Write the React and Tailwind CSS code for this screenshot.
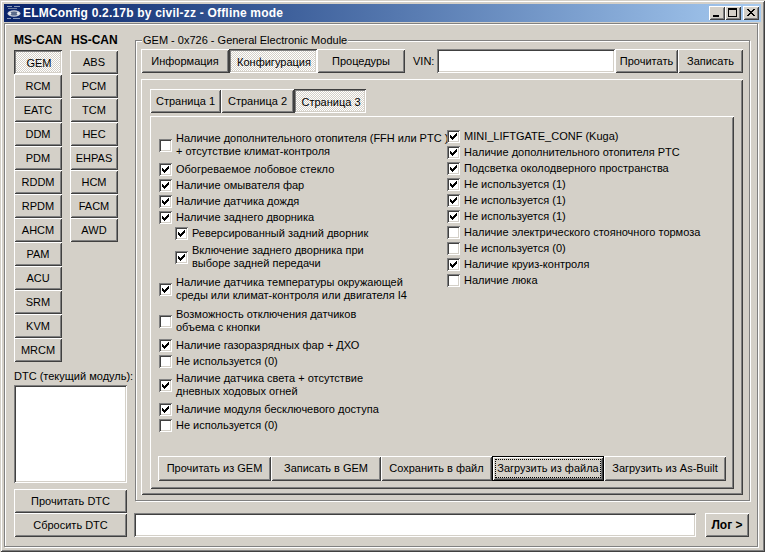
import React from "react";

const RAISED =
  "shadow-[inset_1px_1px_#fff,inset_-1px_-1px_#404040,inset_2px_2px_#d4d0c8,inset_-2px_-2px_#808080]";
const PUSHED =
  "shadow-[inset_1px_1px_#404040,inset_-1px_-1px_#fff,inset_2px_2px_#808080,inset_-2px_-2px_#d4d0c8]";
const SUNKEN =
  "shadow-[inset_1px_1px_#808080,inset_-1px_-1px_#fff,inset_2px_2px_#404040,inset_-2px_-2px_#d4d0c8]";
const CHECKER =
  "bg-[image:repeating-conic-gradient(#fff_0%_25%,#d4d0c8_0%_50%)] bg-[length:2px_2px]";

function Btn({ children, className = "", selected = false }) {
  return (
    <div
      className={`flex items-center justify-center bg-[#d4d0c8] whitespace-nowrap ${
        selected ? `${PUSHED} ${CHECKER} pt-[2px] pl-[2px]` : RAISED
      } ${className}`}
    >
      {children}
    </div>
  );
}

function Check({ on }) {
  return (
    <div className={`w-[13px] h-[13px] shrink-0 bg-white ${SUNKEN}`}>
      {on && (
        <svg width="13" height="13" viewBox="0 0 13 13" shapeRendering="crispEdges" className="block">
          <path
            d="M9 3h1v1h-1zM8 4h2v1h-2zM3 5h1v1h-1zM7 5h3v1h-3zM3 6h2v1h-2zM6 6h3v1h-3zM3 7h5v1h-5zM4 8h3v1h-3zM5 9h1v1h-1z"
            fill="#000"
          />
        </svg>
      )}
    </div>
  );
}

function Row({ on, tall, indent, first, lines }) {
  const h = tall ? "h-[32px]" : first ? "h-[15px]" : "h-[16px]";
  return (
    <div className={`flex items-center gap-[4px] ${h} ${indent ? "pl-[16px]" : ""}`}>
      <Check on={on} />
      <div className="leading-[13px] whitespace-nowrap">
        {lines.map((l, i) => (
          <div key={i}>{l}</div>
        ))}
      </div>
    </div>
  );
}

const LEFT = [
  { on: false, tall: true, lines: ["Наличие дополнительного отопителя (FFH или PTC )", "+ отсутствие климат-контроля"] },
  { on: true, lines: ["Обогреваемое лобовое стекло"] },
  { on: true, lines: ["Наличие омывателя фар"] },
  { on: true, lines: ["Наличие датчика дождя"] },
  { on: true, lines: ["Наличие заднего дворника"] },
  { on: true, indent: true, lines: ["Реверсированный задний дворник"] },
  { on: true, indent: true, tall: true, lines: ["Включение заднего дворника при", "выборе задней передачи"] },
  { on: true, tall: true, lines: ["Наличие датчика температуры окружающей", "среды или климат-контроля или двигателя I4"] },
  { on: false, tall: true, lines: ["Возможность отключения датчиков", "объема с кнопки"] },
  { on: true, lines: ["Наличие газоразрядных фар + ДХО"] },
  { on: false, lines: ["Не используется (0)"] },
  { on: true, tall: true, lines: ["Наличие датчика света + отсутствие", "дневных ходовых огней"] },
  { on: true, lines: ["Наличие модуля бесключевого доступа"] },
  { on: false, lines: ["Не используется (0)"] },
];

const RIGHT = [
  { on: true, first: true, lines: ["MINI_LIFTGATE_CONF (Kuga)"] },
  { on: true, lines: ["Наличие дополнительного отопителя PTC"] },
  { on: true, lines: ["Подсветка околодверного пространства"] },
  { on: true, lines: ["Не используется (1)"] },
  { on: true, lines: ["Не используется (1)"] },
  { on: true, lines: ["Не используется (1)"] },
  { on: false, lines: ["Наличие электрического стояночного тормоза"] },
  { on: false, lines: ["Не используется (0)"] },
  { on: true, lines: ["Наличие круиз-контроля"] },
  { on: false, lines: ["Наличие люка"] },
];

const MS = ["GEM", "RCM", "EATC", "DDM", "PDM", "RDDM", "RPDM", "AHCM", "PAM", "ACU", "SRM", "KVM", "MRCM"];
const HS = ["ABS", "PCM", "TCM", "HEC", "EHPAS", "HCM", "FACM", "AWD"];

function CapBtn({ children, className = "" }) {
  return (
    <div className={`w-[16px] h-[14px] bg-[#d4d0c8] ${RAISED} ${className}`}>
      <svg width="16" height="14" viewBox="0 0 16 14" shapeRendering="crispEdges" className="block">
        {children}
      </svg>
    </div>
  );
}

function AppIcon() {
  return (
    <svg width="16" height="16" viewBox="0 0 16 16" className="block shrink-0">
      <rect x="1" y="1" width="5" height="1" fill="#8a9ab8" />
      <rect x="8" y="1" width="6" height="1" fill="#8a9ab8" />
      <rect x="2" y="3" width="9" height="1" fill="#6f7f9f" />
      <ellipse cx="8" cy="8.5" rx="6.5" ry="3.2" fill="#c8ccd8" />
      <ellipse cx="8" cy="8.5" rx="4" ry="2" fill="#5a6a8a" />
      <circle cx="4" cy="8.5" r="1.2" fill="#eef0f4" />
      <circle cx="12" cy="8.5" r="1.2" fill="#eef0f4" />
      <rect x="1" y="13" width="4" height="1" fill="#8a9ab8" />
      <rect x="7" y="13" width="7" height="1" fill="#8a9ab8" />
    </svg>
  );
}

export default function App() {
  return (
    <div className="w-[765px] h-[552px] bg-[#d4d0c8] p-[4px] flex flex-col font-['Liberation_Sans',Arial,sans-serif] text-[11px] text-black overflow-hidden shadow-[inset_1px_1px_#d4d0c8,inset_-1px_-1px_#404040,inset_2px_2px_#fff,inset_-2px_-2px_#808080]">
      {/* Title bar */}
      <div className="h-[18px] shrink-0 flex items-center bg-linear-to-r from-[#0a246a] to-[#a6caf0] pl-[2px] pr-[2px]">
        <AppIcon />
        <span className="ml-[1px] text-white font-bold text-[12px] tracking-[0.2px] whitespace-nowrap">
          ELMConfig 0.2.17b by civil-zz - Offline mode
        </span>
        <div className="ml-auto flex items-center">
          <CapBtn>
            <rect x="4" y="9" width="6" height="2" fill="#000" />
          </CapBtn>
          <CapBtn>
            <path d="M3 2h9v9h-9zM4 4v6h7v-6z" fillRule="evenodd" fill="#000" />
          </CapBtn>
          <CapBtn className="ml-[2px]">
            <path d="M4 3h2v1h-2zM10 3h2v1h-2zM5 4h2v1h-2zM9 4h2v1h-2zM6 5h4v1h-4zM7 6h2v1h-2zM6 7h4v1h-4zM5 8h2v1h-2zM9 8h2v1h-2zM4 9h2v1h-2zM10 9h2v1h-2z" fill="#000" />
          </CapBtn>
        </div>
      </div>

      {/* Client frame */}
      <div className="mt-[1px] mb-[1px] mr-[3px] flex-1 flex border border-[#808080] shadow-[inset_1px_1px_#fff,1px_1px_#fff] pl-[9px]">
        {/* Left panel */}
        <div className="w-[113px] shrink-0 flex flex-col pt-[8px]">
          <div className="flex h-[16px] items-center font-bold text-[12px]">
            <span className="w-[57px]">MS-CAN</span>
            <span>HS-CAN</span>
          </div>
          <div className="flex gap-[8px] mt-[2px]">
            <div className="flex flex-col w-[48px]">
              {MS.map((m, i) => (
                <Btn key={m} className="h-[24px]" selected={i === 0}>
                  {m}
                </Btn>
              ))}
            </div>
            <div className="flex flex-col w-[48px]">
              {HS.map((m) => (
                <Btn key={m} className="h-[24px]">
                  {m}
                </Btn>
              ))}
            </div>
          </div>
          <div className="mt-[7px] h-[14px] leading-[14px] whitespace-nowrap">DTC (текущий модуль):</div>
          <div className={`mt-[2px] h-[98px] bg-white ${SUNKEN}`} />
          <Btn className="mt-[6px] h-[24px]">Прочитать DTC</Btn>
          <Btn className="h-[24px]">Сбросить DTC</Btn>
        </div>

        {/* Right panel */}
        <div className="w-[616px] ml-[7px] shrink-0 flex flex-col pt-[16px]">
          <div className="relative ml-[1px] w-[615px] h-[461px] border border-[#808080] shadow-[inset_1px_1px_#fff,1px_1px_#fff] pt-[8px] pl-[5px] pr-[6px] flex flex-col">
            <span className="absolute -top-[7px] left-[6px] px-[1px] bg-[#d4d0c8] leading-[13px] whitespace-nowrap">
              GEM - 0x726 - General Electronic Module
            </span>
            <div className="flex h-[24px] shrink-0">
              <Btn className="w-[88px]">Информация</Btn>
              <Btn className="w-[88px]" selected>
                Конфигурация
              </Btn>
              <Btn className="w-[88px]">Процедуры</Btn>
              <span className="ml-[8px] w-[24px] flex items-center">VIN:</span>
              <div className={`w-[178px] bg-white ${SUNKEN}`} />
              <Btn className="w-[63px]">Прочитать</Btn>
              <Btn className="w-[65px]">Записать</Btn>
            </div>

            <div className={`mt-[6px] h-[416px] ${RAISED} pt-[10px] px-[9px] flex flex-col`}>
              <div className="flex h-[24px] shrink-0">
                <Btn className="w-[71px]">Страница 1</Btn>
                <Btn className="w-[73px]">Страница 2</Btn>
                <Btn className="w-[72px]" selected>
                  Страница 3
                </Btn>
              </div>
              <div className={`mt-[3px] h-[373px] ${RAISED} pt-[13px] pl-[8px] pb-[8px] flex flex-col`}>
                <div className="flex pl-[1px]">
                  <div className="w-[288px] shrink-0 flex flex-col">
                    {LEFT.map((r, i) => (
                      <Row key={i} {...r} />
                    ))}
                  </div>
                  <div className="flex flex-col">
                    {RIGHT.map((r, i) => (
                      <Row key={i} {...r} />
                    ))}
                  </div>
                </div>
                <div className="mt-auto flex h-[25px]">
                  <Btn className="w-[113px]">Прочитать из GEM</Btn>
                  <Btn className="w-[110px]">Записать в GEM</Btn>
                  <Btn className="w-[111px]">Сохранить в файл</Btn>
                  <div className={`w-[112px] border border-black bg-[#d4d0c8] p-[2px] ${RAISED}`}>
                    <div className="h-full border border-dotted border-black flex items-center justify-center whitespace-nowrap">
                      Загрузить из файла
                    </div>
                  </div>
                  <Btn className="w-[122px]">Загрузить из As-Built</Btn>
                </div>
              </div>
            </div>
          </div>

          <div className="mt-[12px] flex h-[24px] w-[615px]">
            <div className={`w-[562px] bg-white ${SUNKEN}`} />
            <Btn className="ml-auto w-[44px] font-bold text-[12px]">Лог &gt;</Btn>
          </div>
        </div>
      </div>
    </div>
  );
}
